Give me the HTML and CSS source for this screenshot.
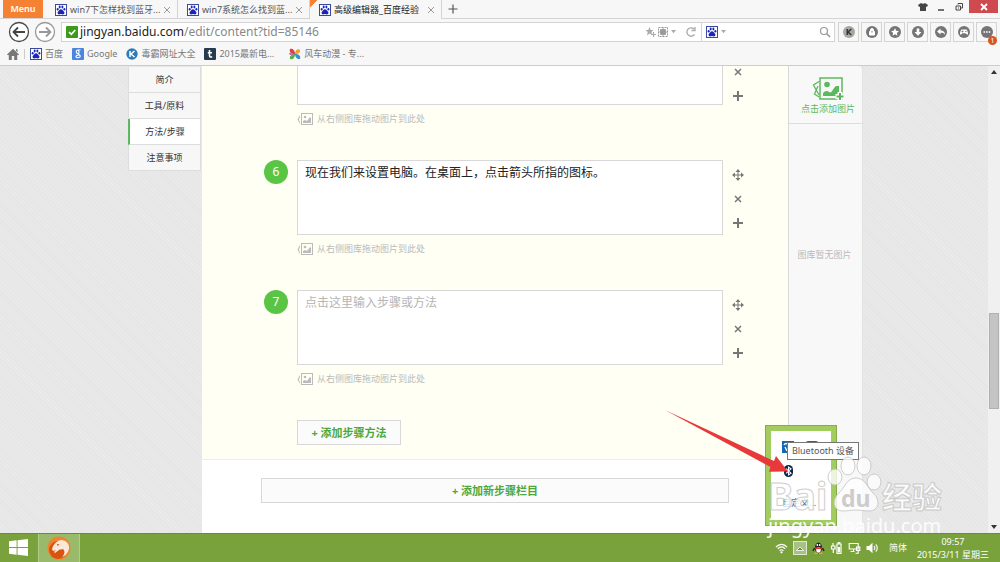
FILE: index.html
```
<!DOCTYPE html>
<html lang="zh-CN">
  <head>
    <meta charset="UTF-8" />
    <title>高级编辑器_百度经验</title>
    <meta name="viewport" content="width=device-width, initial-scale=1" />
    <link rel="stylesheet" href="styles.css">
  </head>
  <body>
    <!-- shared icons -->
    <svg class="sprite" aria-hidden="true">
      <symbol id="paw" viewBox="0 0 12 12">
        <rect x=".5" y=".5" width="11" height="11" fill="#fff" stroke="#3c4a9c" />
        <g fill="#1a24b8">
          <ellipse cx="2.7" cy="5.3" rx="1" ry="1.3" />
          <ellipse cx="4.7" cy="3" rx="1" ry="1.4" />
          <ellipse cx="7.4" cy="3" rx="1" ry="1.4" />
          <ellipse cx="9.4" cy="5.3" rx="1" ry="1.3" />
          <path d="M6 5.2c1.4 0 1.8 1.500 2.800 2.300 1.200 1 .8 2.900-.8 2.900-.8 0-1.200-.3-2-.3s-1.200.3-2 .3c-1.600 0-2-1.900-.8-2.900C4.200 6.700 4.600 5.200 6 5.200z" />
        </g>
      </symbol>
      <symbol id="close" viewBox="0 0 8 8">
        <path d="M1 1l6 6M7 1l-6 6" fill="none" stroke="currentColor" />
      </symbol>
      <symbol id="move" viewBox="0 0 12 12">
        <path d="M6 1v10M1 6h10" fill="none" stroke="currentColor" />
        <path d="M6 0l2.500 3h-5zM6 12l2.500-3h-5zM0 6l3-2.500v5zM12 6l-3-2.500v5z" fill="currentColor" />
      </symbol>
      <symbol id="remove" viewBox="0 0 12 12">
        <path d="M3 3l6 6M9 3l-6 6" fill="none" stroke="currentColor" stroke-width="1.500" />
      </symbol>
      <symbol id="plus" viewBox="0 0 12 12">
        <path d="M6 1v10M1 6h10" fill="none" stroke="currentColor" stroke-width="2" />
      </symbol>
      <symbol id="picture" viewBox="0 0 16 12">
        <rect x="4.500" y=".5" width="11" height="11" fill="none" stroke="currentColor" />
        <circle cx="8" cy="4" r="1.300" fill="currentColor" />
        <path d="M6 10V8l2-1 2 1 3-4 1 1v5zM3 2L.5 6.500 3 11V9.500L1.800 6.500 3 4z" fill="currentColor" />
      </symbol>
    </svg>

    <header class="browser">
      <div class="tabstrip">
        <button class="menu">Menu</button>
        <nav class="tabs">
          <a class="tab" href="#"><svg class="fav"><use href="#paw" /></svg><span>win7下怎样找到蓝牙...</span><svg class="x"><use href="#close" /></svg></a>
          <a class="tab" href="#"><svg class="fav"><use href="#paw" /></svg><span>win7系统怎么找到蓝...</span><svg class="x"><use href="#close" /></svg></a>
          <a class="tab active" href="#"><svg class="fav"><use href="#paw" /></svg><span>高级编辑器_百度经验</span><svg class="x"><use href="#close" /></svg></a>
        </nav>
        <button class="newtab" aria-label="新标签"><svg viewBox="0 0 10 10"><path d="M5 .5v9M.5 5h9" stroke="#555" stroke-width="1.200" /></svg></button>
        <div class="winctl">
          <button aria-label="皮肤"><svg viewBox="0 0 10 10"><path d="M3 1c1 1 3 1 4 0l3 2-1 2-1-.5V9H2V4.500L1 5 0 3z" fill="#444" /></svg></button>
          <button aria-label="最小化"><svg viewBox="0 0 10 10"><path d="M2 8h6" stroke="#444" stroke-width="1.500" /></svg></button>
          <button aria-label="还原"><svg viewBox="0 0 10 10"><path d="M4 2.500V1.500h4.500v4.500H7M2 4h4.500v4H2zM4 6h1" fill="none" stroke="#444" /></svg></button>
          <button class="quit" aria-label="关闭"><svg viewBox="0 0 10 10"><path d="M2 2l6 6M8 2L2 8" stroke="#fff" stroke-width="1.800" /></svg></button>
        </div>
      </div>

      <div class="toolbar">
        <button class="nav" aria-label="后退"><svg viewBox="0 0 22 22"><circle cx="11" cy="11" r="9.500" fill="#fff" stroke="#4a4a4a" stroke-width="1.300" /><path d="M17 11H6M10 6.500L5.500 11l4.500 4.500" fill="none" stroke="#444" stroke-width="1.800" /></svg></button>
        <button class="nav" aria-label="前进"><svg viewBox="0 0 22 22"><circle cx="11" cy="11" r="9.500" fill="#fff" stroke="#999" stroke-width="1.300" /><path d="M5 11h11M12 6.500l4.500 4.500-4.500 4.500" fill="none" stroke="#999" stroke-width="1.800" /></svg></button>
        <div class="address">
          <svg class="fav" viewBox="0 0 12 12"><rect width="12" height="12" rx="1" fill="#3d9b1c" /><path d="M3 6l2.300 2.300L9.300 4" fill="none" stroke="#fff" stroke-width="1.700" /></svg>
          <span class="url"><b>jingyan.baidu.com</b>/edit/content?tid=85146</span>
          <svg class="star" viewBox="0 0 11 12"><path d="M4.500 1l1.200 3H8.500L6.500 6l.5 3L4.500 7.500 2 9.500 2.700 6 .5 4h2.800z" fill="#aaa" /><path d="M8.500 6v5M6 8.500h5" stroke="#aaa" stroke-width="1.200" /></svg>
          <svg class="qr" viewBox="0 0 10 10"><rect x=".5" y=".5" width="9" height="9" fill="none" stroke="#999" stroke-dasharray="2 1" /><path d="M2.500 2.500h5v5h-5zM5 0v10M0 5h10" fill="#999" stroke="#999" stroke-width=".8" /></svg>
          <svg class="caret" viewBox="0 0 6 4"><path d="M0 0h6L3 4z" fill="#aaa" /></svg>
          <svg class="reload" viewBox="0 0 12 12"><path d="M9.500 8.500A4.200 4.200 0 1 1 9 3M10 1v3.500H6.500" fill="none" stroke="#aaa" stroke-width="1.300" /></svg>
        </div>
        <div class="search">
          <svg class="fav"><use href="#paw" /></svg>
          <svg class="caret" viewBox="0 0 6 4"><path d="M0 0h6L3 4z" fill="#aaa" /></svg>
          <input type="text" aria-label="搜索" />
          <svg class="reload" viewBox="0 0 12 12"><circle cx="5" cy="5" r="3.500" fill="none" stroke="#999" stroke-width="1.200" /><path d="M7.500 7.500L11 11" stroke="#999" stroke-width="1.600" /></svg>
        </div>
        <div class="exts">
          <button aria-label="K"><svg viewBox="0 0 12 12"><circle cx="6" cy="6" r="6" fill="#a3a8a0" /><path d="M4.300 3v6M8.300 3L5 6l3.300 3" fill="none" stroke="#333" stroke-width="1.500" /></svg></button>
          <button aria-label="锁"><svg viewBox="0 0 12 12"><circle cx="6" cy="6" r="6" fill="#757575" /><path d="M3.500 5.500h5V9h-5zM4.500 5.500V4a1.500 1.500 0 0 1 3 0v1.500" fill="#fff" stroke="#fff" /><path d="M6 5v1.500" stroke="#757575" /></svg></button>
          <button aria-label="收藏"><svg viewBox="0 0 12 12"><circle cx="6" cy="6" r="6" fill="#757575" /><path d="M6 2l1.200 2.700 2.800.3-2.100 1.900.6 2.900L6 8.300 3.500 9.800l.6-2.900L2 5l2.800-.3z" fill="#fff" /></svg></button>
          <button aria-label="下载"><svg viewBox="0 0 12 12"><circle cx="6" cy="6" r="6" fill="#757575" /><path d="M4.700 2.500h2.600V6H9.500L6 9.700 2.500 6h2.200z" fill="#fff" /></svg></button>
          <button aria-label="恢复"><svg viewBox="0 0 12 12"><circle cx="6" cy="6" r="6" fill="#757575" /><path d="M2 5.500L5.500 2.500v2C8 4.500 10 5.500 10 8.700 9 7 7.500 6.700 5.500 6.700v1.800z" fill="#fff" /></svg></button>
          <button aria-label="游戏"><svg viewBox="0 0 12 12"><circle cx="6" cy="6" r="6" fill="#757575" /><path d="M3.500 3.500h5c1 1 1.700 3 1.500 5-1 .5-2-1.300-2.500-1.300h-3C4 7.200 3 9 2 8.500c-.2-2 .5-4 1.500-5z" fill="#fff" /><path d="M3.500 5.500h2M4.500 4.500v2M7 5.500h1.500" stroke="#757575" stroke-width=".8" /></svg></button>
          <button class="more" aria-label="更多"><svg viewBox="0 0 12 12"><circle cx="6" cy="6" r="6" fill="#757575" /><path d="M2.500 6h7" stroke="#fff" stroke-width="1.600" stroke-dasharray="1.600 1" /></svg><span class="badge">1</span></button>
        </div>
      </div>

      <nav class="bookmarks">
        <svg class="fav" viewBox="0 0 12 12"><path d="M0 6.500L6 .8l6 5.700-1 .8-.8-.6V12H7.200V8H4.800v4H1.800V6.700l-.8.6zM9 1.200h1.500v3L9 2.800z" fill="#777" /></svg>
        <i class="sep"></i>
        <a href="#"><svg class="fav"><use href="#paw" /></svg>百度</a>
        <a href="#"><svg class="fav" viewBox="0 0 12 12"><rect width="12" height="12" rx="1" fill="#4a86e0" /><path d="M8.500 2H6a1.700 1.700 0 0 0 0 3.500c1.800 0 1-3.500-.5-3.300M6 5.500c0 1 2.300 1.200 2.300 2.800S4 10.500 4 8.600C4 7.500 5 7 7 7" fill="none" stroke="#fff" stroke-width="1.100" /></svg>Google</a>
        <a href="#"><svg class="fav" viewBox="0 0 12 12"><circle cx="6" cy="6" r="5.700" fill="#2a7db8" /><path d="M4 3v6M8.500 3L5 6l3.500 3" fill="none" stroke="#fff" stroke-width="1.500" /></svg>毒霸网址大全</a>
        <a href="#"><svg class="fav" viewBox="0 0 12 12"><rect width="12" height="12" rx="1" fill="#263b4d" /><path d="M5.500 2v5.500c0 1.500 1 1.800 2.700 1.300M3.800 4.700h4.200" fill="none" stroke="#fff" stroke-width="1.600" /></svg>2015最新电...</a>
        <a class="last" href="#"><svg class="fav" viewBox="0 0 12 12"><path d="M6 6C2 6 0 4 1 1c3-1 5 2 5 5z" fill="#e23c4a" /><path d="M6 6c0-4 3-6 5-4 .5 3-2 4-5 4z" fill="#f0a12c" /><path d="M6 6c4 0 6 2 5 5-3 .5-5-2-5-5z" fill="#3a8fd6" /><path d="M6 6c0 4-2 6-5 5C0 8 3 6 6 6z" fill="#58b047" /><path d="M6 6L0 5l1 2z" fill="#b8459c" /></svg>风车动漫 - 专...</a>
      </nav>
    </header>

    <div class="viewport">
      <div class="page">
        <nav class="outline">
          <a href="#">简介</a>
          <a href="#">工具/原料</a>
          <a class="on" href="#">方法/步骤</a>
          <a href="#">注意事项</a>
        </nav>

        <main class="editor">
          <section class="steps">
            <div class="step first">
              <textarea aria-label="步骤5"></textarea>
              <div class="tools">
                <button aria-label="删除"><svg><use href="#remove" /></svg></button>
                <button aria-label="添加"><svg><use href="#plus" /></svg></button>
              </div>
              <p class="hint"><svg><use href="#picture" /></svg>从右侧图库拖动图片到此处</p>
            </div>
            <div class="step">
              <label class="num" for="step6">6</label>
              <textarea id="step6">现在我们来设置电脑。在桌面上，点击箭头所指的图标。</textarea>
              <div class="tools">
                <button aria-label="移动"><svg><use href="#move" /></svg></button>
                <button aria-label="删除"><svg><use href="#remove" /></svg></button>
                <button aria-label="添加"><svg><use href="#plus" /></svg></button>
              </div>
              <p class="hint"><svg><use href="#picture" /></svg>从右侧图库拖动图片到此处</p>
            </div>
            <div class="step">
              <label class="num" for="step7">7</label>
              <textarea id="step7" placeholder="点击这里输入步骤或方法"></textarea>
              <div class="tools">
                <button aria-label="移动"><svg><use href="#move" /></svg></button>
                <button aria-label="删除"><svg><use href="#remove" /></svg></button>
                <button aria-label="添加"><svg><use href="#plus" /></svg></button>
              </div>
              <p class="hint"><svg><use href="#picture" /></svg>从右侧图库拖动图片到此处</p>
            </div>
            <button class="add add-step">+ 添加步骤方法</button>
          </section>
          <button class="add add-section">+ 添加新步骤栏目</button>
        </main>

        <aside class="gallery">
          <button class="upload">
            <svg viewBox="0 0 32 24"><rect x="8" y="1" width="22" height="21" fill="none" stroke="#5cb85c" stroke-width="1.500" /><circle cx="15" cy="7.500" r="2.800" fill="#5cb85c" /><path d="M11 19v-3c2-2 4-3 6-1 3 2 4-4 7-6h3v10z" fill="#5cb85c" /><path d="M7 4.500L1.500 8 7 18M6 9l-3.500 8L7 20" fill="none" stroke="#5cb85c" stroke-width="1.300" /><path d="M28 15v9M23.500 19.500H32" stroke="#fff" stroke-width="5" /><path d="M28 16v7M24.500 19.500h7" stroke="#5cb85c" stroke-width="2" /></svg>
            点击添加图片
          </button>
          <p>图库暂无图片</p>
        </aside>
      </div>

      <div class="scrollbar">
        <svg viewBox="0 0 6 4"><path d="M0 4h6L3 0z" fill="#333" /></svg>
        <i class="before"></i>
        <i class="thumb"></i>
        <i class="after"></i>
        <svg viewBox="0 0 6 4"><path d="M0 0h6L3 4z" fill="#333" /></svg>
      </div>
    </div>

    <footer class="taskbar">
      <button class="start" aria-label="开始"><svg viewBox="0 0 20 18"><path d="M0 2.500L8 1.400V8.500H0zM9 1.200L20 0v8.500H9zM0 9.500h8v7L0 15.500zM9 9.500h11V18L9 16.700z" fill="#fff" /></svg></button>
      <button class="app" aria-label="猎豹浏览器"><svg viewBox="0 0 24 24"><circle cx="12" cy="12" r="11.500" fill="#ee8430" /><circle cx="11" cy="14" r="9" fill="#d9540f" /><path d="M5 13c1-4 4-8 9-9 5 0 9 4 8 9-1 4-4 7-7 8 3-3 3-6 1-8-2 1-3 0-4 1l-4 3-1-1 2-2-3 1z" fill="#fbe8d8" /><path d="M10 8l2.500.5-2 1.500z" fill="#c04a10" /></svg></button>
      <div class="tray">
        <svg viewBox="0 0 14 12"><path d="M1 5c3.500-4 8.500-4 12 0M3 7c2.500-3 5.500-3 8 0M5 9c1.200-1.500 2.800-1.500 4 0" fill="none" stroke="#fff" stroke-width="1.300" /><circle cx="7" cy="10.700" r="1.200" fill="#fff" /></svg>
        <button class="up" aria-label="显示隐藏的图标"><svg viewBox="0 0 8 5"><path d="M.5 4.500h7L4 1z" fill="#6b8f3c" stroke="#fff" stroke-width=".8" /></svg></button>
        <svg viewBox="0 0 12 12"><ellipse cx="6" cy="6" rx="3.500" ry="5.500" fill="#222" /><path d="M2 6l-1.500 3M10 6l1.500 3" stroke="#222" stroke-width="1.500" /><ellipse cx="6" cy="8" rx="2.300" ry="2.800" fill="#fff" /><path d="M2.500 5.500h7v1.500h-7z" fill="#e5342b" /><circle cx="4.800" cy="3" r=".9" fill="#fff" /><circle cx="7.200" cy="3" r=".9" fill="#fff" /><path d="M2 10.500h3.500v1.500H2zM6.500 10.500H10v1.500H6.500z" fill="#f5a623" /></svg>
        <svg viewBox="0 0 12 12"><path d="M6.500 2h4v9.500h-4zM7.700 2V.7h1.600V2M2.500 1v3M1 4h3.500v3H1zM2.800 7v4" fill="none" stroke="#fff" stroke-width="1.200" /><path d="M7.500 5h2v5.500h-2z" fill="#fff" /></svg>
        <svg viewBox="0 0 12 12"><path d="M.7 1.500h9v5.500h-9zM5 7v2M2 9.500h4M8 5h3.300v3.500H8zM9.700 8.500v2.800H7" fill="none" stroke="#fff" stroke-width="1.100" /></svg>
        <svg viewBox="0 0 12 12"><path d="M0 4h2.500L6 .8v10.400L2.500 8H0z" fill="#fff" /><path d="M7.500 4c1 1.300 1 2.700 0 4M9.300 2.300c2 2.500 2 4.900 0 7.400" fill="none" stroke="#fff" stroke-width="1.100" /></svg>
        <span class="ime">简体</span>
        <div class="clock"><span>09:57</span><span>2015/3/11 星期三</span></div>
      </div>
    </footer>

    <!-- overflow tray popup with its tooltip -->
    <div class="popup">
      <div class="popup-row">
        <svg viewBox="0 0 12 12"><rect width="12" height="12" fill="#1766b0" /><path d="M2 4c1-2 3-2 4 0M3 6l2 4M7 5l3-2" fill="none" stroke="#fff" stroke-width="1.300" /></svg>
        <svg viewBox="0 0 12 12"><rect width="12" height="12" rx="2" fill="#1766b0" /></svg>
      </div>
      <svg class="bt" viewBox="0 0 9 12"><rect width="9" height="12" rx="4.500" fill="#0c2550" /><path d="M2 3.700l5 4.500L4.500 10V2L7 3.800 2 8.300" fill="none" stroke="#fff" stroke-width="1.100" /></svg>
      <a href="#">自定义...</a>
    </div>
    <div class="tooltip" role="tooltip">Bluetooth 设备</div>

    <svg class="arrow" viewBox="0 0 130 75"><path d="M5 5L114 56l2-5 12 15.500-19 .2 1.500-4.700z" fill="#e8393a" /></svg>

    <svg class="watermark" viewBox="0 0 184 88">
      <g class="wm-big">
        <text x="2" y="56">Bai</text>
        <ellipse cx="69" cy="23" rx="7" ry="8" />
        <ellipse cx="82" cy="12" rx="7" ry="9" />
        <ellipse cx="98" cy="12" rx="7" ry="9" />
        <ellipse cx="108" cy="28" rx="7" ry="8" />
        <path d="M90 24c9 0 11 9 17 15 8 7 6 18-4 18-5 0-8-1-13-1s-8 1-13 1c-10 0-12-11-4-18 6-6 8-15 17-15z" />
        <text class="wm-cn" x="116" y="54">经验</text>
      </g>
      <text class="wm-du" x="75" y="53">du</text>
      <text class="wm-url" x="2" y="79">jingyan.baidu.com</text>
    </svg>
  </body>
</html>
```
FILE: styles.css
```
:root {
  --chrome: #f7f7f7;
  --line: #d4d4d4;
  --green: #5cb85c;
  --text: #333;
  --muted: #bbb;
}
* {
  box-sizing: border-box;
}
body {
  margin: 0;
  height: 100vh;
  overflow: hidden;
  position: relative;
  display: flex;
  flex-direction: column;
  font-family: "Noto Sans", "Noto Sans CJK SC", sans-serif;
  font-size: 9px;
  line-height: 12px;
  color: var(--text);
}
a {
  color: inherit;
  text-decoration: none;
}
button {
  padding: 0;
  border: none;
  background: none;
  font: inherit;
  color: inherit;
  cursor: pointer;
}
svg {
  display: block;
  flex: none;
}
p {
  margin: 0;
}
.sprite {
  display: none;
}
.fav {
  width: 12px;
  height: 12px;
}

/* ---------- Browser chrome ---------- */
.browser {
  background: var(--chrome);
  border-bottom: 1px solid #ccc;
}
.tabstrip {
  display: flex;
  height: 19px;
  padding-left: 3px;
  border-bottom: 1px solid var(--line);
}
.menu {
  width: 40px;
  height: 18px;
  background: #f58233;
  color: #fff;
  font-weight: 600;
  font-size: 9px;
}
.tabs {
  display: flex;
  margin-left: 3px;
}
.tab {
  display: flex;
  align-items: center;
  width: 132px;
  height: 19px;
  padding: 0 6px 0 9px;
  gap: 3px;
  border-right: 1px solid var(--line);
  white-space: nowrap;
  color: #555;
}
.tab span {
  flex: 1;
}
.tab.active {
  background: linear-gradient(135deg, #f58233 5px, var(--chrome) 5px);
  color: #222;
}
.x {
  width: 8px;
  height: 8px;
  color: #999;
}
.newtab {
  width: 22px;
}
.newtab svg {
  width: 10px;
  margin: auto;
}
.winctl {
  display: flex;
  margin-left: auto;
  padding-right: 2px;
}
.winctl button {
  width: 18px;
  height: 13px;
}
.winctl .quit {
  width: 29px;
  margin-left: 1px;
  background: #cf4a4f;
}
.winctl svg {
  width: 10px;
  margin: auto;
}
.toolbar {
  display: flex;
  align-items: center;
  height: 26px;
  padding: 0 3px 0 8px;
}
.nav {
  margin-right: 4px;
}
.nav svg {
  width: 22px;
}
.address,
.search {
  display: flex;
  align-items: center;
  height: 20px;
  border: 1px solid var(--line);
  background: #fff;
}
.address {
  flex: 1;
  margin-left: 1px;
  padding: 0 4px;
}
.url {
  flex: 1;
  margin-left: 2px;
  font-size: 12px;
  line-height: 16px;
  color: #888;
}
.url b {
  font-weight: 400;
  color: #222;
}
.star {
  width: 11px;
}
.qr {
  width: 10px;
  margin-left: 2px;
}
.caret {
  width: 5px;
  margin: 0 3px;
}
.reload {
  width: 12px;
}
.address .reload {
  margin-left: 6px;
}
.search {
  width: 134px;
  margin-left: -1px;
  padding: 0 3px 0 4px;
}
.search input {
  flex: 1;
  min-width: 0;
  border: none;
  outline: none;
}
.exts {
  display: flex;
  gap: 2px;
  margin-left: 3px;
}
.exts button {
  position: relative;
  width: 21px;
  height: 20px;
  border: 1px solid var(--line);
}
.exts svg {
  width: 12px;
  margin: auto;
}
.badge {
  position: absolute;
  right: -1px;
  bottom: -4px;
  width: 9px;
  height: 9px;
  border-radius: 50%;
  background: #d9541e;
  color: #fff;
  font-size: 7px;
  line-height: 9px;
}
.bookmarks {
  display: flex;
  align-items: center;
  height: 20px;
  padding: 0 7px 2px;
  gap: 5px;
  color: #777;
}
.bookmarks a {
  display: flex;
  align-items: center;
  gap: 3px;
  margin-right: 4px;
  white-space: nowrap;
}
.bookmarks .last {
  margin-left: 6px;
}
.sep {
  width: 1px;
  height: 10px;
  background: #ccc;
}

/* ---------- Page ---------- */
.viewport {
  flex: 1;
  min-height: 0;
  display: flex;
  padding-left: 3px;
  background: repeating-linear-gradient(45deg, #e5e5e5 0 1px, #e9e9e9 1px 3px);
}
.page {
  flex: 1;
  display: grid;
  grid-template-columns: 74px 1fr 75px;
  max-width: 735px;
  margin: 0 auto;
}
.outline {
  padding-top: 1px;
}
.outline a {
  display: block;
  height: 26px;
  margin-right: 1px;
  border: 1px solid #ddd;
  border-top: none;
  background: #f7f7f7;
  line-height: 25px;
  text-align: center;
}
.outline .on {
  background: #fff;
  border-left: 2px solid var(--green);
}
.editor {
  background: #fff;
}
.steps {
  padding: 0 44px 14px 62px;
  background: #fffff3;
  border-bottom: 1px solid #eee;
}
.step {
  display: grid;
  grid-template-columns: 24px 1fr 12px;
  column-gap: 9px;
  padding-bottom: 33px;
}
.num {
  width: 24px;
  height: 24px;
  border-radius: 50%;
  background: #5ac544;
  color: #fff;
  font-size: 12px;
  line-height: 24px;
  text-align: center;
}
.step textarea {
  grid-column: 2;
  width: 100%;
  height: 75px;
  padding: 4px 7px;
  border: 1px solid #d8d8d8;
  outline: none;
  resize: none;
  background: #fff;
  color: #222;
  font: 12px/16px "Noto Sans", "Noto Sans CJK SC", sans-serif;
}
.step textarea::placeholder {
  color: #b5b5b5;
}
.step.first textarea {
  height: 39px;
  border-top: none;
}
.tools {
  display: flex;
  flex-direction: column;
  gap: 12px;
  padding-top: 9px;
  color: #777;
}
.step.first .tools {
  padding-top: 0;
}
.tools svg {
  width: 12px;
  height: 12px;
}
.hint {
  grid-column: 2;
  display: flex;
  align-items: center;
  gap: 4px;
  height: 14px;
  margin-top: 7px;
  margin-bottom: 1px;
  color: var(--muted);
}
.hint svg {
  width: 16px;
  height: 12px;
}
.add {
  height: 25px;
  border: 1px solid #d8d8d8;
  background: #fbfbfb;
  color: #4ca83c;
  font-size: 11px;
  font-weight: 700;
}
.add-step {
  width: 104px;
  margin-left: 33px;
}
.add-section {
  display: block;
  width: 80%;
  margin: 18px auto 0;
}
.gallery {
  background: #f8f8f8;
  border-left: 1px solid #d8d8d8;
  border-right: 1px solid #e2e2e2;
  border-radius: 0 4px 0 0;
  text-align: center;
}
.gallery .upload {
  width: 100%;
  height: 58px;
  padding: 2px 0 0 5px;
  border-bottom: 1px solid #ddd;
  color: var(--green);
}
.upload svg {
  width: 32px;
  margin: 0 auto 2px;
}
.gallery p {
  margin-top: 125px;
  padding-right: 2px;
  color: var(--muted);
}
.scrollbar {
  display: flex;
  flex-direction: column;
  align-items: center;
  width: 12px;
  padding: 4px 1px;
  background: #f0f0f0;
}
.scrollbar svg {
  width: 6px;
}
.before {
  flex: 240;
}
.thumb {
  flex: 94;
  width: 100%;
  background: #c4c4c4;
  border: 1px solid #b0b0b0;
}
.after {
  flex: 116;
}

/* ---------- Taskbar ---------- */
.taskbar {
  display: flex;
  align-items: center;
  height: 29px;
  padding-left: 9px;
  border-top: 1px solid #6a8c38;
  background: #7aa23c;
  color: #fff;
}
.start svg {
  width: 19px;
}
.app {
  width: 42px;
  height: 28px;
  margin-left: 10px;
  border: 1px solid #b3cc8b;
  border-width: 0 1px;
  background: #9aba6b;
}
.app svg {
  width: 24px;
  margin: auto;
}
.tray {
  display: flex;
  align-items: center;
  gap: 5px;
  margin-left: auto;
  padding-right: 11px;
}
.tray > svg {
  width: 13px;
  height: 12px;
}
.up {
  width: 14px;
  height: 14px;
  border: 1px solid #dfe9cf;
  background: #a9c184;
}
.up svg {
  width: 8px;
  margin: auto;
}
.ime {
  margin: 0 5px;
}
.clock {
  display: flex;
  flex-direction: column;
  align-items: center;
  line-height: 13px;
}

/* ---------- Things lying over the page ---------- */
.popup {
  position: absolute;
  right: 163px;
  bottom: 36px;
  width: 72px;
  height: 101px;
  padding: 10px 11px 6px;
  border: 6px solid #a3cc5f;
  outline: 1px solid #86ad4a;
  outline-offset: -1px;
  background: #fff;
}
.popup-row {
  display: flex;
  gap: 12px;
}
.popup-row svg {
  width: 12px;
}
.bt {
  width: 9px;
  margin: 12px 0 20px 2px;
}
.popup a {
  display: block;
  color: #2a6ebb;
}
.tooltip {
  position: absolute;
  right: 141px;
  bottom: 102px;
  padding: 2px 4px;
  border: 1px solid #767676;
  background: #fff;
  color: #555;
  font-size: 9px;
}
.arrow {
  position: absolute;
  right: 210px;
  bottom: 82px;
  width: 130px;
}
.watermark {
  position: absolute;
  right: 50px;
  bottom: 20px;
  width: 184px;
  font-family: "Noto Sans", "Noto Sans CJK SC", sans-serif;
  fill: #fff;
  pointer-events: none;
}
.wm-big {
  font-size: 38px;
  font-weight: 700;
  stroke: #c4c4c4;
  stroke-width: 1px;
  opacity: 0.8;
}
.wm-cn {
  font-size: 30px;
}
.wm-du {
  font-size: 23px;
  font-weight: 700;
  fill: #ccc;
}
.wm-url {
  font-size: 20px;
  opacity: 0.9;
}
```
